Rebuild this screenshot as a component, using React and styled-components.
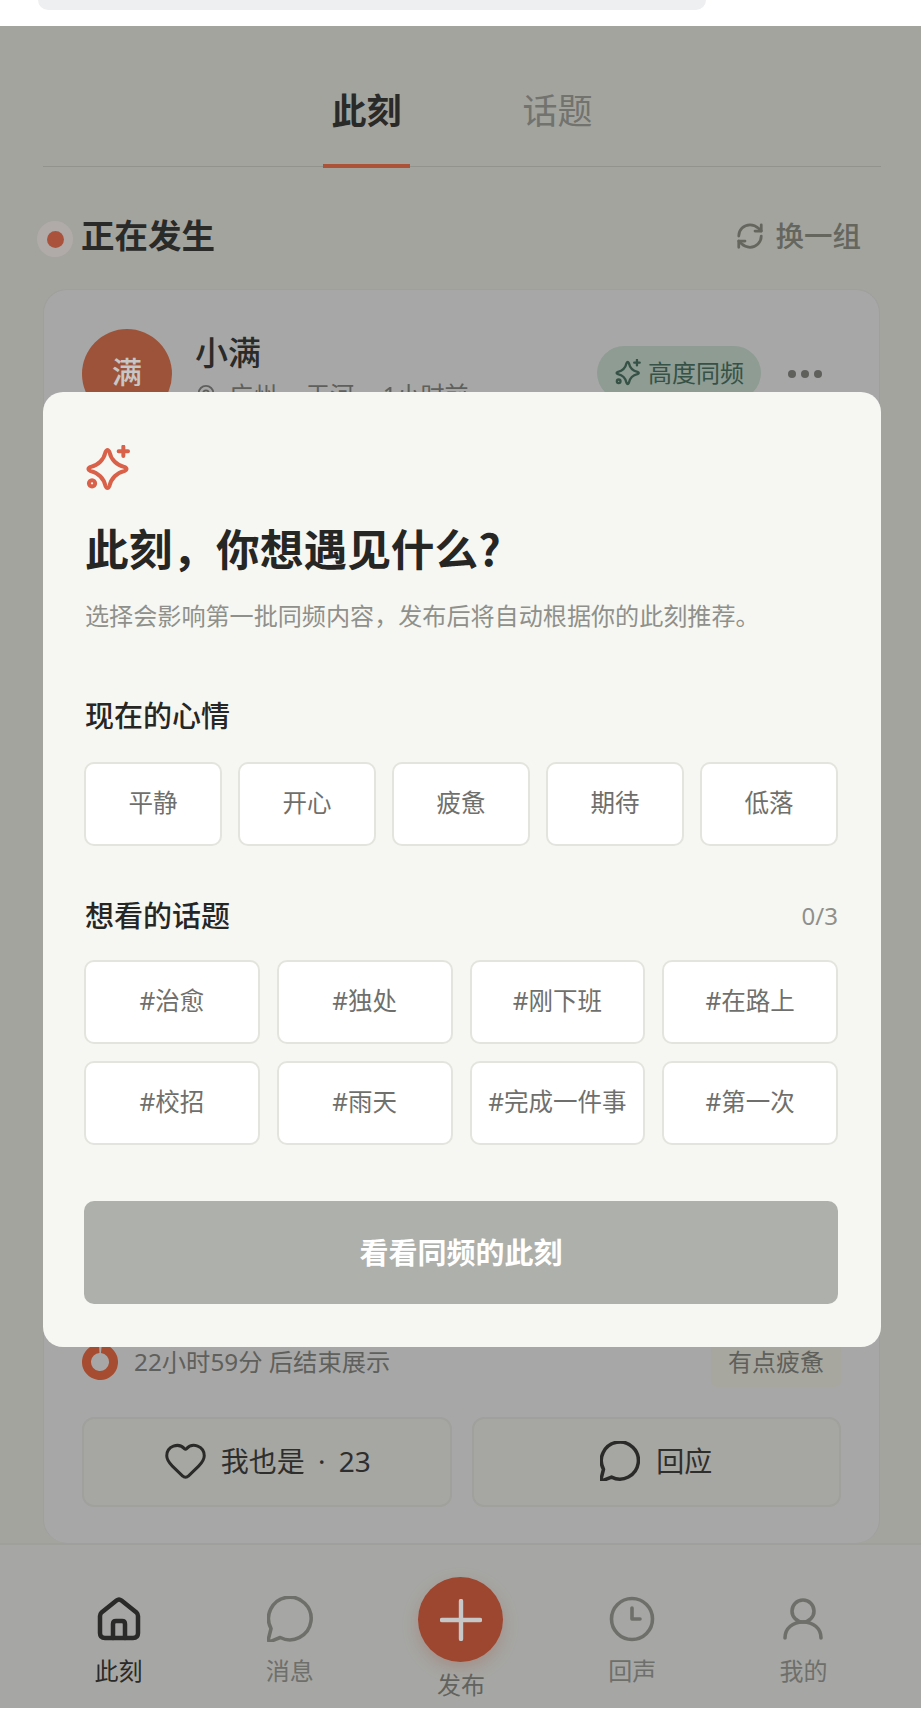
import styled, { createGlobalStyle } from "styled-components";
import { RefreshCw, Heart, MapPin } from "lucide-react";

const moods = ["平静", "开心", "疲惫", "期待", "低落"];
const topics = ["#治愈", "#独处", "#刚下班", "#在路上", "#校招", "#雨天", "#完成一件事", "#第一次"];

const GlobalStyle = createGlobalStyle`
  html, body { margin: 0; padding: 0; background: #fff; }
  * { box-sizing: border-box; }
  body { font-family: "Noto Sans", "Noto Sans CJK SC", sans-serif; }
  button { font-family: inherit; }
`;

const Page = styled.div`
  position: relative;
  width: 921px;
  height: 1715px;
  background: #fff;
  display: flex;
  flex-direction: column;
  overflow: hidden;
`;
const TopStrip = styled.div`
  height: 26px;
  padding: 0 215px 0 38px;
  flex-shrink: 0;
`;
const SearchPill = styled.div`
  height: 10px;
  background: #eeeff1;
  border-radius: 0 0 20px 20px;
`;
const Screen = styled.div`
  flex: 1;
  min-height: 0;
  display: flex;
  flex-direction: column;
  background: #d1d2cb;
`;
const Tabs = styled.div`
  height: 141px;
  margin: 0 40px 0 43px;
  display: flex;
  justify-content: center;
  gap: 104px;
  border-bottom: 1px solid #bdbdb6;
  flex-shrink: 0;
`;
const Tab = styled.div`
  height: 142px;
  padding: 67px 8.5px 0;
  font-size: 35px;
  line-height: 36px;
  font-weight: ${(p) => (p.$active ? 600 : 400)};
  color: ${(p) => (p.$active ? "#363634" : "#92938d")};
  border-bottom: 4px solid ${(p) => (p.$active ? "#dc6a4a" : "transparent")};
`;
const SectionRow = styled.div`
  margin-top: 55px;
  padding: 0 60px 0 37px;
  height: 34px;
  display: flex;
  align-items: center;
  flex-shrink: 0;
`;
const LiveDot = styled.span`
  width: 36px;
  height: 36px;
  border-radius: 50%;
  background: #e2dcd8;
  display: flex;
  align-items: center;
  justify-content: center;
  &::after {
    content: "";
    width: 17px;
    height: 17px;
    border-radius: 50%;
    background: #dc6a4f;
  }
`;
const SectionTitle = styled.div`
  margin-left: 8px;
  padding-bottom: 8px;
  font-size: 33.5px;
  line-height: 34px;
  font-weight: 600;
  color: #363634;
`;
const Swap = styled.div`
  margin-left: auto;
  padding-bottom: 7px;
  display: flex;
  align-items: center;
  gap: 10px;
  font-size: 28.5px;
  line-height: 34px;
  font-weight: 500;
  color: #828379;
`;
const Card = styled.div`
  flex: 1;
  min-height: 0;
  margin: 33px 41px 0 43px;
  padding: 39px 38px 36px 38px;
  display: flex;
  flex-direction: column;
  background: #d7d7d7;
  border: 1px solid #ccccc8;
  border-bottom: none;
  border-radius: 24px;
`;
const CardHead = styled.div`
  display: flex;
  align-items: center;
`;
const Avatar = styled.div`
  width: 90px;
  height: 90px;
  padding-bottom: 8px;
  border-radius: 50%;
  background: #c96b49;
  color: #fff;
  font-size: 30px;
  font-weight: 500;
  display: flex;
  align-items: center;
  justify-content: center;
  flex-shrink: 0;
`;
const Who = styled.div`
  margin-left: 23px;
  display: flex;
  flex-direction: column;
  align-self: flex-start;
`;
const Name = styled.div`
  font-size: 33px;
  line-height: 40px;
  font-weight: 500;
  color: #363634;
  margin-top: 4px;
`;
const Meta = styled.div`
  margin-top: 6px;
  display: flex;
  align-items: center;
  gap: 12px;
  font-size: 24px;
  line-height: 32px;
  word-spacing: 5px;
  color: #7a7b76;
`;
const MatchBadge = styled.div`
  margin-left: auto;
  height: 54px;
  margin-top: -2px;
  padding: 0 17px;
  border-radius: 27px;
  background: #b6c8bd;
  color: #46695a;
  display: flex;
  align-items: center;
  gap: 6px;
  font-size: 24px;
  line-height: 50px;
`;
const MoreDots = styled.div`
  margin: 0 19px 0 27px;
  display: flex;
  gap: 5px;
  & > span {
    width: 8px;
    height: 8px;
    border-radius: 50%;
    background: #7a7b76;
  }
`;
const CardBody = styled.div`
  flex: 1;
`;
const TimerRow = styled.div`
  display: flex;
  align-items: center;
  justify-content: space-between;
`;
const TimerLeft = styled.div`
  display: flex;
  align-items: center;
  gap: 16px;
  font-size: 24.3px;
  line-height: 36px;
  color: #7a7b76;
`;
const MoodTag = styled.div`
  height: 50px;
  padding: 0 17px;
  border-radius: 6px;
  background: #d6d7cc;
  color: #7a7b76;
  font-size: 24px;
  line-height: 50px;
`;
const Actions = styled.div`
  margin-top: 30px;
  display: grid;
  grid-template-columns: 1fr 1fr;
  gap: 20px;
`;
const ActionButton = styled.div`
  height: 90px;
  padding-bottom: 3px;
  border-radius: 12px;
  background: #d5d5d1;
  border: 2px solid #cdcdc8;
  color: #3c3c3a;
  display: flex;
  align-items: center;
  justify-content: center;
  gap: ${(p) => p.$gap}px;
  font-size: 28px;
  line-height: 40px;
  word-spacing: 6px;
`;
const Nav = styled.div`
  height: 165px;
  flex-shrink: 0;
  padding: 0 32px 0 33px;
  display: grid;
  grid-template-columns: repeat(5, 1fr);
  background: #d5d6d2;
  border-top: 2px solid #ccccc8;
`;
const NavItem = styled.div`
  display: flex;
  flex-direction: column;
  align-items: center;
  padding-top: 51px;
  font-size: 24px;
  line-height: 30px;
  color: ${(p) => (p.$active ? "#363634" : "#8e8f8a")};
`;
const NavIcon = styled.div`
  height: 46px;
  margin-bottom: 14px;
  display: flex;
  align-items: center;
  justify-content: center;
`;
const PublishItem = styled(NavItem)`
  padding-top: 32px;
  color: #7e7e7a;
`;
const Fab = styled.div`
  width: 85px;
  height: 85px;
  margin-bottom: 8px;
  border-radius: 50%;
  background: #c95b3f;
  display: flex;
  align-items: center;
  justify-content: center;
  box-shadow: 0 6px 16px rgba(201, 91, 63, 0.25);
`;
const BottomStrip = styled.div`
  height: 7px;
  flex-shrink: 0;
`;
const Scrim = styled.div`
  position: absolute;
  top: 26px;
  left: 0;
  right: 0;
  bottom: 7px;
  padding: 366px 40px 0 43px;
  background: rgba(0, 0, 0, 0.22);
  display: flex;
  align-items: flex-start;
`;
const Modal = styled.div`
  flex: 1;
  padding: 53px 43px 43px 41px;
  background: #f6f7f2;
  border-radius: 20px;
`;
const ModalIcon = styled.div`
  display: flex;
`;
const ModalTitle = styled.h2`
  margin: 26px 0 0;
  padding-left: 1px;
  font-family: "Noto Sans CJK SC", sans-serif;
  font-size: 43.7px;
  line-height: 56px;
  font-weight: 600;
  color: #262625;
`;
const ModalSub = styled.p`
  margin: 23px 0 0;
  font-size: 24.1px;
  line-height: 36px;
  color: #8f908b;
  padding-left: 1px;
`;
const GroupHead = styled.div`
  margin-top: ${(p) => p.$top}px;
  padding-left: 1px;
  display: flex;
  align-items: center;
  justify-content: space-between;
  font-size: 29px;
  line-height: 36px;
  font-weight: 500;
  color: #262625;
`;
const Count = styled.span`
  font-size: 24px;
  font-weight: 400;
  color: #8f908b;
`;
const ChipGrid = styled.div`
  margin-top: ${(p) => p.$top}px;
  display: grid;
  grid-template-columns: repeat(${(p) => p.$cols}, 1fr);
  gap: ${(p) => p.$gap}px;
`;
const Chip = styled.button`
  height: 84px;
  padding: 0 0 5px;
  background: #fff;
  border: 2px solid #e4e4de;
  border-radius: 10px;
  color: #6f6f6c;
  font-size: 24.5px;
`;
const Submit = styled.button`
  display: block;
  width: 100%;
  height: 103px;
  margin-top: 56px;
  padding: 0 0 4px;
  background: #aeb0ac;
  border: none;
  border-radius: 10px;
  color: #fff;
  font-size: 29px;
  font-weight: 600;
`;

function Sparkle({ size, color, stroke }) {
  return (
    <svg width={size} height={size} viewBox="0 0 46 46" fill="none" stroke={color} strokeWidth={stroke} strokeLinecap="round" strokeLinejoin="round">
      <path d="M20.500 7Q22.500 2.500 24.500 7C26 14 31.500 19.500 38.500 21Q43 23 38.500 25C31.500 26.500 26 32 24.500 39Q22.500 43.500 20.500 39C19 32 13.500 26.500 6.500 25Q2 23 6.500 21C13.500 19.500 19 14 20.500 7Z" />
      <path d="M37.700 1.500V10.500M33.200 6H42.200" />
      <circle cx="7.700" cy="36.700" r="3" />
    </svg>
  );
}

function Bubble({ size, color, stroke }) {
  return (
    <svg width={size} height={size} viewBox="2 1.500 20.500 20.500" fill="none" stroke={color} strokeWidth={stroke} strokeLinecap="round" strokeLinejoin="round">
      <path d="M7.900 20A9.500 9.500 0 1 0 3.800 16L2.700 20.400Q2.300 22 3.900 21.600Z" />
    </svg>
  );
}

function HomeIcon() {
  return (
    <svg width="44" height="44" viewBox="0 0 44 44" fill="none" stroke="#363634" strokeWidth="4.500" strokeLinejoin="round" strokeLinecap="round">
      <path d="M3 19Q3 17 4.500 15.500L19.500 3.500Q22 1.500 24.500 3.500L39.500 15.500Q41 17 41 19V36Q41 41 36 41H8Q3 41 3 36Z" />
      <path d="M16 41V27Q16 24 19 24H25Q28 24 28 27V41" />
    </svg>
  );
}

function ClockIcon() {
  return (
    <svg width="46" height="46" viewBox="0 0 46 46" fill="none" stroke="#8e8f8a" strokeWidth="3.600" strokeLinecap="round" strokeLinejoin="round">
      <circle cx="23" cy="23" r="20.500" />
      <path d="M23 12V23H31" />
    </svg>
  );
}

function PersonIcon() {
  return (
    <svg width="46" height="46" viewBox="0 0 46 46" fill="none" stroke="#8e8f8a" strokeWidth="3.600" strokeLinecap="round">
      <circle cx="23" cy="15" r="11" />
      <path d="M5 42C5 32 13 26 23 26C33 26 41 32 41 42" />
    </svg>
  );
}

function PlusIcon() {
  return (
    <svg width="42" height="42" viewBox="0 0 42 42" fill="none" stroke="#fff" strokeWidth="4.400" strokeLinecap="round">
      <path d="M21 2V40M2 21H40" />
    </svg>
  );
}

function TimerRing() {
  return (
    <svg width="36" height="36" viewBox="0 0 36 36" fill="none" stroke="#d5633f" strokeWidth="9">
      <circle cx="18" cy="18" r="13.500" strokeDasharray="82 3" transform="rotate(-84 18 18)" />
    </svg>
  );
}

export default function App() {
  return (
    <Page>
      <GlobalStyle />
      <TopStrip>
        <SearchPill />
      </TopStrip>
      <Screen>
        <Tabs>
          <Tab $active>此刻</Tab>
          <Tab>话题</Tab>
        </Tabs>
        <SectionRow>
          <LiveDot />
          <SectionTitle>正在发生</SectionTitle>
          <Swap>
            <RefreshCw size={30} strokeWidth={2.2} />
            换一组
          </Swap>
        </SectionRow>
        <Card>
          <CardHead>
            <Avatar>满</Avatar>
            <Who>
              <Name>小满</Name>
              <Meta>
                <MapPin size={22} />
                广州 · 天河 · 1小时前
              </Meta>
            </Who>
            <MatchBadge>
              <Sparkle size={28} color="#46695a" stroke={3.8} />
              高度同频
            </MatchBadge>
            <MoreDots>
              <span />
              <span />
              <span />
            </MoreDots>
          </CardHead>
          <CardBody />
          <TimerRow>
            <TimerLeft>
              <TimerRing />
              22小时59分 后结束展示
            </TimerLeft>
            <MoodTag>有点疲惫</MoodTag>
          </TimerRow>
          <Actions>
            <ActionButton $gap={13}>
              <Heart size={45} strokeWidth={1.6} color="#363634" />
              我也是 · 23
            </ActionButton>
            <ActionButton $gap={16}>
              <Bubble size={40} color="#363634" stroke={1.8} />
              回应
            </ActionButton>
          </Actions>
        </Card>
        <Nav>
          <NavItem $active>
            <NavIcon>
              <HomeIcon />
            </NavIcon>
            此刻
          </NavItem>
          <NavItem>
            <NavIcon>
              <Bubble size={46} color="#8e8f8a" stroke={1.6} />
            </NavIcon>
            消息
          </NavItem>
          <PublishItem>
            <Fab>
              <PlusIcon />
            </Fab>
            发布
          </PublishItem>
          <NavItem>
            <NavIcon>
              <ClockIcon />
            </NavIcon>
            回声
          </NavItem>
          <NavItem>
            <NavIcon>
              <PersonIcon />
            </NavIcon>
            我的
          </NavItem>
        </Nav>
      </Screen>
      <BottomStrip />
      <Scrim>
        <Modal>
          <ModalIcon>
            <Sparkle size={48} color="#d9614a" stroke={3.8} />
          </ModalIcon>
          <ModalTitle>此刻，你想遇见什么?</ModalTitle>
          <ModalSub>选择会影响第一批同频内容，发布后将自动根据你的此刻推荐。</ModalSub>
          <GroupHead $top={64}>现在的心情</GroupHead>
          <ChipGrid $top={28} $cols={5} $gap={16}>
            {moods.map((m) => (
              <Chip key={m}>{m}</Chip>
            ))}
          </ChipGrid>
          <GroupHead $top={52}>
            想看的话题
            <Count>0/3</Count>
          </GroupHead>
          <ChipGrid $top={26} $cols={4} $gap={17}>
            {topics.map((t) => (
              <Chip key={t}>{t}</Chip>
            ))}
          </ChipGrid>
          <Submit>看看同频的此刻</Submit>
        </Modal>
      </Scrim>
    </Page>
  );
}
